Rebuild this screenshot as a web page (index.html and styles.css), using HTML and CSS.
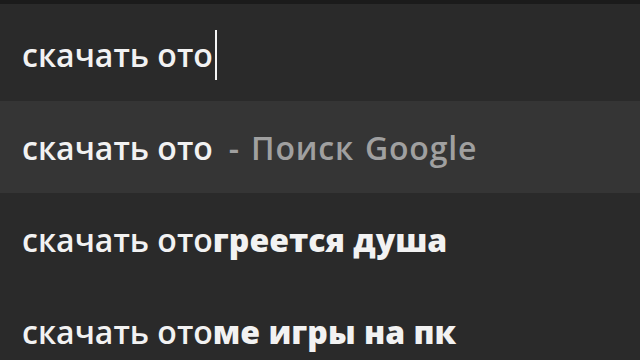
FILE: index.html
```html
<!DOCTYPE html>
<html lang="ru">
<head>
    <meta charset="UTF-8" />
    <title>Omnibox</title>
    <link rel="stylesheet" href="styles.css">
</head>
<body>
<div class="omnibox">
    <div class="input-row">
        <span class="query">скачать ото</span><span class="caret"></span>
    </div>
    <div class="suggestions">
        <div class="suggestion selected">
            <span>скачать ото</span><span class="hint">- Поиск Google</span>
        </div>
        <div class="suggestion">
            <span>скачать ото</span><b>греется душа</b>
        </div>
        <div class="suggestion">
            <span>скачать ото</span><b>ме игры на пк</b>
        </div>
    </div>
</div>
</body>
</html>
```
FILE: styles.css
```css
body {
  margin: 0;
  width: 640px;
  height: 360px;
  overflow: hidden;
  background-color: #2a2a2a;
  font-family: "Open Sans", "Noto Sans", sans-serif;
  font-size: 32px;
  color: #f2f2f2;
}

.omnibox {
  border-top: 4px solid #1b1b1b;
}

.input-row {
  height: 97px;
  display: flex;
  align-items: center;
  padding-left: 22px;
  padding-top: 4px;
  box-sizing: border-box;
  font-weight: 600;
}

.caret {
  width: 2px;
  height: 50px;
  margin-left: 2px;
  background-color: #f4f4f4;
}

.suggestion {
  height: 92px;
  display: flex;
  align-items: center;
  padding-left: 22px;
  box-sizing: border-box;
  font-weight: 600;
  white-space: nowrap;
}

.suggestion b {
  font-weight: 800;
}

.selected {
  background-color: #353535;
}

.hint {
  margin-left: 16px;
  color: #a0a0a0;
  font-weight: 600;
  letter-spacing: 0.8px;
  word-spacing: 2px;
}
```
